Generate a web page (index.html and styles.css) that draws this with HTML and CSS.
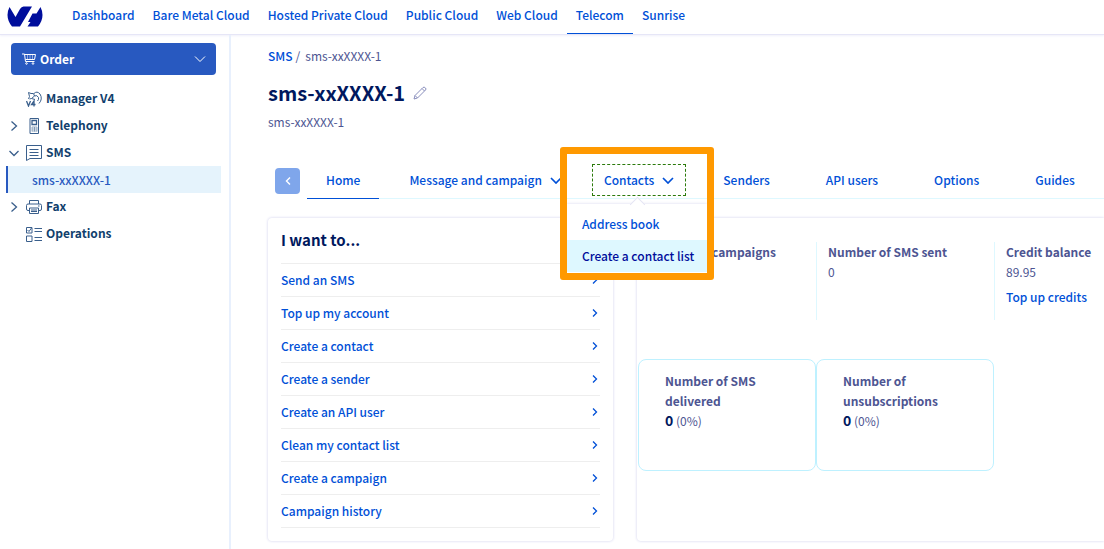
FILE: index.html
```html
<!DOCTYPE html>
<html lang="en">
<head>
<meta charset="utf-8">
<meta name="viewport" content="width=device-width, initial-scale=1">
<title>sms-xxXXXX-1</title>
<link rel="stylesheet" href="styles.css">
</head>
<body>
<header class="topbar">
  <a class="logo" href="#" aria-label="Home page">
    <svg viewBox="0 0 36 21" width="36" height="21"><path fill="#000e9c" d="M2.500 1 8.500 11 13 3Q14.500 .5 16.500 .5H25L13 20.500H5Q-2.500 11 2.500 1ZM33.500 1Q38.500 11 31 20.500H20.500L23.500 16H21L25.500 7.500H29.500Z"/></svg>
  </a>
  <nav class="universes">
    <a href="#">Dashboard</a>
    <a href="#">Bare Metal Cloud</a>
    <a href="#">Hosted Private Cloud</a>
    <a href="#">Public Cloud</a>
    <a href="#">Web Cloud</a>
    <a class="active" href="#">Telecom</a>
    <a href="#">Sunrise</a>
  </nav>
</header>
<div class="layout">
  <aside class="sidebar">
    <button class="order" type="button">
      <svg viewBox="0 0 14 12" width="14" height="12"><path class="line" d="M0 1H2.500L3.500 8.500H12.500M2.500 1.500H13.500L12.500 6.500H3.500"/><path class="line faint" d="M5.500 2V6M8 2V6M10.500 2V6"/><circle class="line" cx="4.500" cy="10.500" r=".8"/><circle class="line" cx="11" cy="10.500" r=".8"/></svg>
      <span>Order</span>
      <svg class="order-arrow" viewBox="0 0 12 8" width="12" height="8"><path class="line" d="m1 1.500 5 5 5-5"/></svg>
    </button>
    <ul class="tree">
      <li><a href="#"><i class="toggle"></i>
        <svg viewBox="0 0 16 16" width="16" height="16"><path class="line" d="M2.500 8 3.500 5.500 2.500 1.500 5 2.500H7.500L8.500 5 5.500 7.500 3.500 8M8 2.500Q11-.5 14 3 17 8 13 12.500M8.500 5Q11 3.500 12.500 6.500 13 8.500 11.500 10M5.500 7.500 9 8.500"/><path class="line bold" d="m.5 10 2 5 2-5M8 15.500V10L5.500 13.500H9.500"/></svg>
        <span>Manager V4</span></a></li>
      <li><a href="#"><i class="toggle"><svg viewBox="0 0 10 10" width="10" height="10"><path class="line thick" d="m2.500 .5 5 4.500-5 4.500"/></svg></i>
        <svg viewBox="0 0 16 16" width="16" height="16"><path class="line" d="M4 15.500V.5H12.500V15.500Z"/><path class="line thick" d="M6 2.500H10.500V6.500H6Z"/><path class="line faint" d="M6 9H11M6 11H11M6 13H11M6 9V13.500M8.500 9V13.500M11 9V13.500"/></svg>
        <span>Telephony</span></a></li>
      <li><a href="#"><i class="toggle"><svg viewBox="0 0 10 10" width="10" height="10"><path class="line thick" d="m.5 3 4.500 4.500L9.500 3"/></svg></i>
        <svg viewBox="0 0 16 16" width="16" height="16"><path class="line" d="M.5 .5H15.500V13.500H4L.5 15.500ZM3.500 4.500H12.500M3.500 7.500H12.500M3.500 10.500H12.500"/></svg>
        <span>SMS</span></a></li>
      <li><a class="current" href="#">sms-xxXXXX-1</a></li>
      <li><a href="#"><i class="toggle"><svg viewBox="0 0 10 10" width="10" height="10"><path class="line thick" d="m2.500 .5 5 4.500-5 4.500"/></svg></i>
        <svg viewBox="0 0 16 16" width="16" height="16"><path class="line" d="M3.500 5V1.500H12.500V5M3.500 11.500H2Q.5 11.500.5 10V6.500Q.5 5 2 5H14Q15.500 5 15.500 6.500V10Q15.500 11.500 14 11.500H12.500M3.500 9H12.500V14.500H3.500ZM5 11H11M5 12.500H11M12 7H13.500"/></svg>
        <span>Fax</span></a></li>
      <li><a href="#"><i class="toggle"></i>
        <svg viewBox="0 0 16 16" width="16" height="16"><path class="line" d="M.5 1.500H6V7H.5ZM.5 10H6V15.500H.5ZM1.500 4 3 5.500 5.500 2M8.500 2.500H16M8.500 5.500H16M8.500 11.500H16M8.500 14.500H16"/></svg>
        <span>Operations</span></a></li>
    </ul>
  </aside>
  <main class="content">
    <nav class="crumbs"><a href="#">SMS</a><span>/</span><span class="crumb-now">sms-xxXXXX-1</span></nav>
    <div class="title">
      <h1>sms-xxXXXX-1</h1>
      <button class="edit" type="button" aria-label="Edit name"><svg viewBox="0 0 14 14" width="14" height="14"><path class="line" d="M1 13 2 9.500 10 1.500Q11 .5 12.500 2 13.500 3 12.500 4L4.500 12ZM9 2.500 11.500 5M2 9.500 4.500 12"/></svg></button>
    </div>
    <p class="subtitle">sms-xxXXXX-1</p>
    <div class="tabbar">
      <button class="back" type="button" aria-label="Previous tabs"><svg viewBox="0 0 6 8" width="6" height="8"><path class="line" d="M5 .5 1.500 4 5 7.500"/></svg></button>
      <nav class="tabs">
        <a class="tab selected" href="#">Home</a>
        <button class="tab drop" type="button">Message and campaign <svg viewBox="0 0 12 8" width="12" height="8"><path class="line" d="m1 2 5 5 5-5"/></svg></button>
        <div class="drop-wrap">
          <button class="tab drop focused" type="button" aria-expanded="true">Contacts <svg viewBox="0 0 12 8" width="12" height="8"><path class="line" d="m1 2 5 5 5-5"/></svg></button>
          <div class="menu">
            <a href="#">Address book</a>
            <a class="hovered" href="#">Create a contact list</a>
          </div>
          <div class="highlight"></div>
        </div>
        <a class="tab" href="#">Senders</a>
        <a class="tab" href="#">API users</a>
        <a class="tab" href="#">Options</a>
        <a class="tab" href="#">Guides</a>
      </nav>
    </div>
    <div class="panels">
      <section class="panel actions">
        <h2>I want to...</h2>
        <ul>
          <li><a href="#">Send an SMS<svg viewBox="0 0 6 8" width="6" height="8"><path class="line" d="m1 .5 3.500 3.500L1 7.500"/></svg></a></li>
          <li><a href="#">Top up my account<svg viewBox="0 0 6 8" width="6" height="8"><path class="line" d="m1 .5 3.500 3.500L1 7.500"/></svg></a></li>
          <li><a href="#">Create a contact<svg viewBox="0 0 6 8" width="6" height="8"><path class="line" d="m1 .5 3.500 3.500L1 7.500"/></svg></a></li>
          <li><a href="#">Create a sender<svg viewBox="0 0 6 8" width="6" height="8"><path class="line" d="m1 .5 3.500 3.500L1 7.500"/></svg></a></li>
          <li><a href="#">Create an API user<svg viewBox="0 0 6 8" width="6" height="8"><path class="line" d="m1 .5 3.500 3.500L1 7.500"/></svg></a></li>
          <li><a href="#">Clean my contact list<svg viewBox="0 0 6 8" width="6" height="8"><path class="line" d="m1 .5 3.500 3.500L1 7.500"/></svg></a></li>
          <li><a href="#">Create a campaign<svg viewBox="0 0 6 8" width="6" height="8"><path class="line" d="m1 .5 3.500 3.500L1 7.500"/></svg></a></li>
          <li><a href="#">Campaign history<svg viewBox="0 0 6 8" width="6" height="8"><path class="line" d="m1 .5 3.500 3.500L1 7.500"/></svg></a></li>
        </ul>
      </section>
      <section class="panel stats">
        <div class="figures">
          <div class="figure first"><h3>campaigns</h3></div>
          <div class="figure"><h3>Number of SMS sent</h3><p>0</p></div>
          <div class="figure"><h3>Credit balance</h3><p>89.95</p><a href="#">Top up credits</a></div>
        </div>
        <div class="cards">
          <div class="card"><h3>Number of SMS delivered</h3><p><strong>0</strong> (0%)</p></div>
          <div class="card"><h3>Number of unsubscriptions</h3><p><strong>0</strong> (0%)</p></div>
        </div>
      </section>
    </div>
  </main>
</div>
</body>
</html>
```
FILE: styles.css
```css
* { box-sizing: border-box; }
body {
  margin: 0;
  min-height: 100vh;
  display: flex;
  flex-direction: column;
  background: #fff;
  color: #4d5592;
  font: 400 12px/20px "Noto Sans CJK SC", "Open Sans", sans-serif;
}
a { color: #0050d7; text-decoration: none; font-weight: 500; }
button { font: inherit; border: 0; background: none; padding: 0; cursor: pointer; }
ul { list-style: none; margin: 0; padding: 0; }
h1, h2, h3, p { margin: 0; }
svg { display: block; flex: none; }
.line { fill: none; stroke: currentColor; stroke-width: 1; }
.thick { stroke-width: 1.3; }
.bold { stroke-width: 1.3; }
.faint { opacity: .5; }

.topbar {
  display: flex;
  height: 35px;
  padding-left: 7px;
  border-bottom: 1px solid #e6e6f7;
  box-shadow: 0 1px 2px #f0f0fa;
}
.logo { padding-top: 6px; }
.universes { display: flex; margin-left: 20px; }
.universes a { padding: 5px 9px 0; line-height: 20px; height: 34px; white-space: nowrap; }
.universes .active { border-bottom: 1px solid #0050d7; }

.layout { flex: 1; display: flex; }
.sidebar {
  flex: none;
  width: 231px;
  padding: 8px 8px 0 6px;
  border-right: 2px solid #e8f0fd;
}
.order {
  display: flex;
  align-items: center;
  gap: 4px;
  width: 205px;
  height: 32px;
  margin-left: 5px;
  padding: 0 10px 0 11px;
  border-radius: 4px;
  background: #2859c0;
  color: #fff;
  font-weight: 700;
}
.order-arrow { margin-left: auto; }
.tree { padding-top: 10px; }
.tree a { display: flex; align-items: center; gap: 4px; height: 27px; color: #113f6d; font-weight: 700; }
.tree span { padding-bottom: 2px; }
.tree svg { color: #3a5f8c; }
.toggle { width: 16px; padding-left: 3px; }
.tree .current { padding-left: 24px; background: #e5f3fc; border-left: 2px solid #2859c0; color: #2859c0; font-weight: 500; }

.content { flex: 1; min-width: 0; padding: 11px 0 8px 37px; }
.crumbs { display: flex; gap: 3px; }
.crumb-now { margin-left: 2px; }
.title { display: flex; align-items: center; gap: 8px; margin-top: 11px; }
h1 { font-size: 20px; line-height: 32px; color: #00185e; }
.edit { color: #8a8fbd; }
.subtitle { margin-top: 3px; }

.tabbar { display: flex; align-items: flex-start; gap: 7px; margin-top: 32px; padding-left: 7px; }
.back {
  flex: none;
  display: flex;
  align-items: center;
  justify-content: center;
  width: 25px;
  height: 26px;
  margin-top: 4px;
  border-radius: 4px;
  background: #7fa6eb;
  color: #fff;
}
.back .line { stroke-width: 1.4; }
.tabs { flex: 1; display: flex; gap: 18px; height: 35px; border-bottom: 1px solid #def8ff; }
.tab { padding: 0 19px; line-height: 32px; height: 34px; color: #0050d7; font-weight: 500; white-space: nowrap; }
.selected { border-bottom: 1px solid #0050d7; height: 35px; }
.drop { display: flex; align-items: center; gap: 8px; height: 32px; padding: 0 11px; border: 1px solid transparent; }
.drop .line { stroke-width: 1.7; }
.focused { border: 1px dashed #2b7a0b; }
.drop-wrap { position: relative; }
.menu {
  position: absolute;
  z-index: 2;
  top: 40px;
  left: -25px;
  width: 140px;
  padding: 4px 0 1px;
  background: #fff;
  box-shadow: 0 0 3px #d8d8ee;
}
.menu::before {
  content: "";
  position: absolute;
  top: -5px;
  left: 65px;
  width: 10px;
  height: 10px;
  background: #fff;
  border: solid #e4e4f4;
  border-width: 1px 0 0 1px;
  transform: rotate(45deg);
}
.menu a { display: block; padding: 6px 15px; white-space: nowrap; }
.menu .hovered { background: #def8ff; color: #000e9c; }
.highlight {
  position: absolute;
  z-index: 3;
  top: -17px;
  left: -32px;
  width: 154px;
  height: 133px;
  border: 7px solid #ff9900;
  border-radius: 3px;
  pointer-events: none;
}

.panels { display: flex; gap: 24px; margin-top: 19px; }
.panel { border-radius: 4px; box-shadow: 0 0 3px #ceceec; }
.actions { flex: none; width: 345px; padding: 12px 13px 13px; }
h2 { padding-bottom: 13px; font-size: 15px; line-height: 20px; color: #00185e; border-bottom: 1px solid #eee; }
.actions a {
  display: flex;
  align-items: center;
  justify-content: space-between;
  height: 33px;
  padding-right: 2px;
  border-bottom: 1px solid #eee;
}
.actions .line { stroke-width: 1.3; }
.stats { flex: 1; min-width: 0; padding: 24px 1px; border-radius: 4px 0 0 4px; }
h3 { font-size: 12px; line-height: 20px; color: #4d5592; }
.figures, .cards { display: grid; grid-template-columns: 178px 178px 1fr; }
.figure { height: 78px; padding-left: 11px; border-left: 1px solid #def8ff; }
.figure.first { padding: 0 40px 0 0; border-left: 0; text-align: right; }
.figure a { display: block; margin-top: 5px; }
.cards { margin-top: 39px; }
.card { height: 112px; padding: 11px 26px; border: 1px solid #bef1ff; border-radius: 8px; }
.card strong { font-size: 14px; line-height: 16px; color: #00185e; }
```
